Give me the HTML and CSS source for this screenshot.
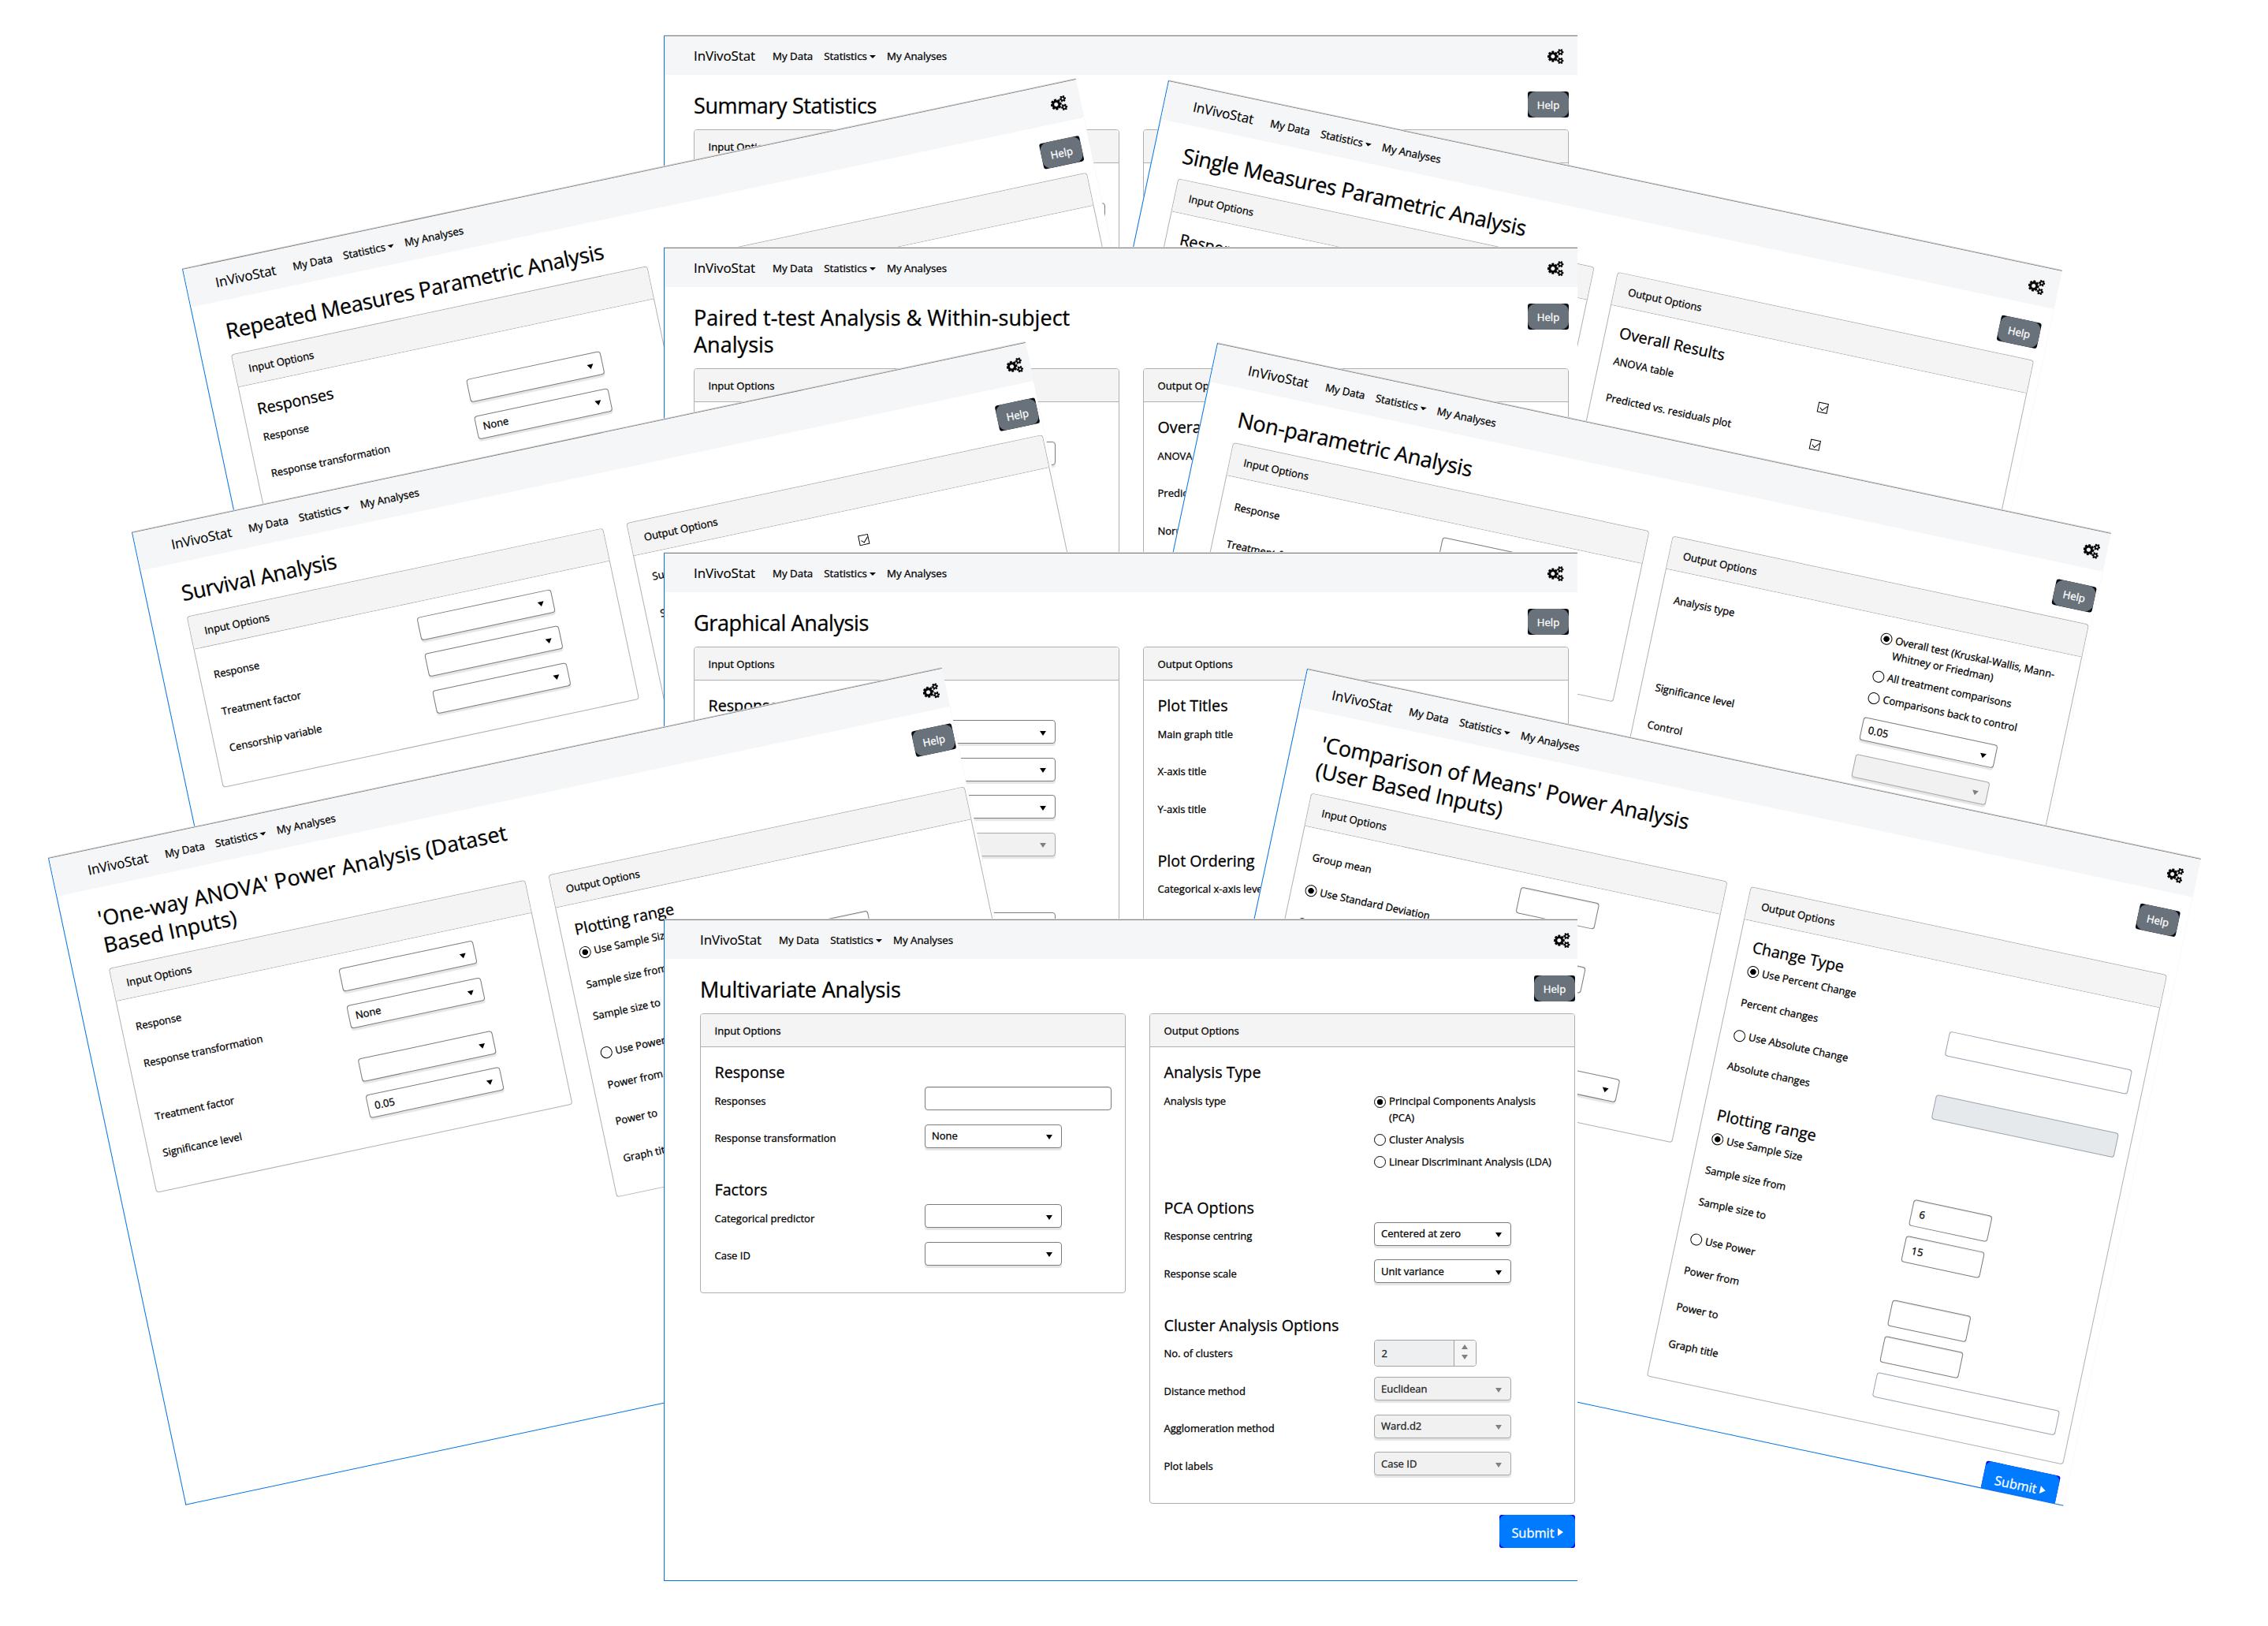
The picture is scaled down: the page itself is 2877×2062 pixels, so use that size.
FILE: index.html
```html
<!DOCTYPE html>
<html lang="en">
<head>
<meta charset="utf-8">
<title>InVivoStat</title>
<link rel="stylesheet" href="styles.css">
</head>
<body>
<svg class="sprite" aria-hidden="true">
  <symbol id="cogs" viewBox="0 0 1920 1792"><path d="M896 896q0-106-75-181t-181-75-181 75-75 181 75 181 181 75 181-75 75-181zm768 512q0-52-38-90t-90-38-90 38-38 90q0 53 37.5 90.5t90.5 37.5 90.5-37.5 37.5-90.5zm0-1024q0-52-38-90t-90-38-90 38-38 90q0 53 37.5 90.5t90.5 37.5 90.5-37.5 37.5-90.5zm-384 421v185q0 10-7 19.5t-16 10.5l-155 24q-11 35-32 76 34 48 90 115 7 11 7 20 0 12-7 19-23 30-82.5 89.5t-78.5 59.5q-11 0-21-7l-115-90q-37 19-77 31-11 108-23 155-7 24-30 24h-186q-11 0-20-7.5t-10-17.5l-23-153q-34-10-75-31l-118 89q-7 7-20 7-11 0-21-8-144-133-144-160 0-9 7-19 10-14 41-53t47-61q-23-44-35-82l-152-24q-10-1-17-9.5t-7-19.5v-185q0-10 7-19.5t16-10.5l155-24q11-35 32-76-34-48-90-115-7-11-7-20 0-12 7-20 22-30 82-89t79-59q11 0 21 7l115 90q34-18 77-32 11-108 23-154 7-24 30-24h186q11 0 20 7.5t10 17.5l23 153q34 10 75 31l118-89q8-7 20-7 11 0 21 8 144 133 144 160 0 8-7 19-12 16-42 54t-45 60q23 48 34 82l152 23q10 2 17 10.5t7 19.5zm640 533v140q0 16-149 31-12 27-30 52 51 113 51 138 0 4-4 7-122 71-124 71-8 0-46-47t-52-68q-20 2-30 2t-30-2q-14 21-52 68t-46 47q-2 0-124-71-4-3-4-7 0-25 51-138-18-25-30-52-149-15-149-31v-140q0-16 149-31 13-29 30-52-51-113-51-138 0-4 4-7 4-2 35-20t59-34 30-16q8 0 46 46.5t52 67.5q20-2 30-2t30 2q51-71 92-112l6-2q4 0 124 70 4 3 4 7 0 25-51 138 17 23 30 52 149 15 149 31zm0-1024v140q0 16-149 31-12 27-30 52 51 113 51 138 0 4-4 7-122 71-124 71-8 0-46-47t-52-68q-20 2-30 2t-30-2q-14 21-52 68t-46 47q-2 0-124-71-4-3-4-7 0-25 51-138-18-25-30-52-149-15-149-31v-140q0-16 149-31 13-29 30-52-51-113-51-138 0-4 4-7 4-2 35-20t59-34 30-16q8 0 46 46.5t52 67.5q20-2 30-2t30 2q51-71 92-112l6-2q4 0 124 70 4 3 4 7 0 25-51 138 17 23 30 52 149 15 149 31z"/></symbol>
</svg>
<main class="desktop">

  <article class="window summary">
    <nav class="navbar"><a class="brand">InVivoStat</a><a>My Data</a><a class="dropdown">Statistics</a><a>My Analyses</a><svg class="cogs"><use href="#cogs"/></svg></nav>
    <div class="page">
      <header class="heading"><h1>Summary Statistics</h1><button class="help">Help</button></header>
      <div class="cards">
        <section class="card tall">
          <h2>Input Options</h2>
          <div class="body">
            <fieldset>
              <h3>Responses</h3>
              <div class="row"><label>Responses</label><span class="text"></span></div>
            </fieldset>
          </div>
        </section>
        <section class="card tall"><h2>Output Options</h2></section>
      </div>
    </div>
  </article>

  <article class="window repeated">
    <nav class="navbar"><a class="brand">InVivoStat</a><a>My Data</a><a class="dropdown">Statistics</a><a>My Analyses</a><svg class="cogs"><use href="#cogs"/></svg></nav>
    <div class="page">
      <header class="heading"><h1>Repeated Measures Parametric Analysis</h1><button class="help">Help</button></header>
      <div class="cards">
        <section class="card tall">
          <h2>Input Options</h2>
          <div class="body">
            <fieldset>
              <h3>Responses</h3>
              <div class="row"><label>Response</label><span class="select"></span></div>
              <div class="row"><label>Response transformation</label><span class="select">None</span></div>
            </fieldset>
          </div>
        </section>
        <section class="card tall"><h2>Output Options</h2></section>
      </div>
    </div>
  </article>

  <article class="window single">
    <nav class="navbar"><a class="brand">InVivoStat</a><a>My Data</a><a class="dropdown">Statistics</a><a>My Analyses</a><svg class="cogs"><use href="#cogs"/></svg></nav>
    <div class="page">
      <header class="heading"><h1>Single Measures Parametric Analysis</h1><button class="help">Help</button></header>
      <div class="cards">
        <section class="card tall">
          <h2>Input Options</h2>
          <div class="body"><fieldset><h3>Responses</h3></fieldset></div>
        </section>
        <section class="card tall">
          <h2>Output Options</h2>
          <div class="body">
            <fieldset>
              <h3>Overall Results</h3>
              <div class="row"><label>ANOVA table</label><span class="check"></span></div>
              <div class="row"><label>Predicted vs. residuals plot</label><span class="check"></span></div>
            </fieldset>
          </div>
        </section>
      </div>
    </div>
  </article>

  <article class="window paired">
    <nav class="navbar"><a class="brand">InVivoStat</a><a>My Data</a><a class="dropdown">Statistics</a><a>My Analyses</a><svg class="cogs"><use href="#cogs"/></svg></nav>
    <div class="page">
      <header class="heading"><h1 class="wide">Paired t-test Analysis &amp; Within-subject<br>Analysis</h1><button class="help">Help</button></header>
      <div class="cards">
        <section class="card tall">
          <h2>Input Options</h2>
          <div class="body">
            <fieldset>
              <h3>Responses</h3>
              <div class="row"><label>Response</label><span class="select"></span></div>
            </fieldset>
          </div>
        </section>
        <section class="card tall">
          <h2>Output Options</h2>
          <div class="body">
            <fieldset>
              <h3>Overall Results</h3>
              <div class="row"><label>ANOVA table</label></div>
              <div class="row"><label>Predicted vs. residuals plot</label></div>
              <div class="row"><label>Normal probability plot</label></div>
            </fieldset>
          </div>
        </section>
      </div>
    </div>
  </article>

  <article class="window survival inset">
    <nav class="navbar"><a class="brand">InVivoStat</a><a>My Data</a><a class="dropdown">Statistics</a><a>My Analyses</a><svg class="cogs"><use href="#cogs"/></svg></nav>
    <div class="page">
      <header class="heading"><h1>Survival Analysis</h1><button class="help">Help</button></header>
      <div class="cards">
        <section class="card">
          <h2>Input Options</h2>
          <div class="body plain">
            <fieldset>
              <div class="row"><label>Response</label><span class="select"></span></div>
              <div class="row"><label>Treatment factor</label><span class="select"></span></div>
              <div class="row"><label>Censorship variable</label><span class="select"></span></div>
            </fieldset>
          </div>
        </section>
        <section class="card tall">
          <h2>Output Options</h2>
          <div class="body plain">
            <fieldset>
              <div class="row raised"><label>Survival plot</label><span class="check"></span></div>
              <div class="row raised"><label>Significance level</label></div>
            </fieldset>
          </div>
        </section>
      </div>
    </div>
  </article>

  <article class="window nonparametric inset">
    <nav class="navbar"><a class="brand">InVivoStat</a><a>My Data</a><a class="dropdown">Statistics</a><a>My Analyses</a><svg class="cogs"><use href="#cogs"/></svg></nav>
    <div class="page">
      <header class="heading"><h1 class="loose">Non-parametric Analysis</h1><button class="help">Help</button></header>
      <div class="cards">
        <section class="card">
          <h2>Input Options</h2>
          <div class="body plain">
            <fieldset>
              <div class="row"><label>Response</label><span class="select"></span></div>
              <div class="row"><label>Treatment factor</label></div>
              <div class="row"></div>
            </fieldset>
          </div>
        </section>
        <section class="card tall">
          <h2>Output Options</h2>
          <div class="body plain">
            <fieldset>
              <div class="row options compact">
                <label>Analysis type</label>
                <div class="radios">
                  <span class="radio on">Overall test (Kruskal-Wallis, Mann-<br>Whitney or Friedman)</span>
                  <span class="radio">All treatment comparisons</span>
                  <span class="radio">Comparisons back to control</span>
                </div>
              </div>
              <div class="row"><label>Significance level</label><span class="select">0.05</span></div>
              <div class="row"><label>Control</label><span class="select disabled"></span></div>
            </fieldset>
          </div>
        </section>
      </div>
    </div>
  </article>

  <article class="window graphical">
    <nav class="navbar"><a class="brand">InVivoStat</a><a>My Data</a><a class="dropdown">Statistics</a><a>My Analyses</a><svg class="cogs"><use href="#cogs"/></svg></nav>
    <div class="page">
      <header class="heading"><h1>Graphical Analysis</h1><button class="help">Help</button></header>
      <div class="cards">
        <section class="card tall">
          <h2>Input Options</h2>
          <div class="body">
            <fieldset>
              <h3>Response</h3>
              <div class="row"><label></label><span class="select"></span></div>
              <div class="row"><label></label><span class="select"></span></div>
              <div class="row"><label></label><span class="select"></span></div>
              <div class="row"><label></label><span class="select disabled"></span></div>
            </fieldset>
            <fieldset>
              <h3></h3>
              <div class="row"><label></label><span class="select"></span></div>
            </fieldset>
          </div>
        </section>
        <section class="card tall">
          <h2>Output Options</h2>
          <div class="body">
            <fieldset>
              <h3>Plot Titles</h3>
              <div class="row"><label>Main graph title</label></div>
              <div class="row"><label>X-axis title</label></div>
              <div class="row"><label>Y-axis title</label></div>
            </fieldset>
            <fieldset>
              <h3>Plot Ordering</h3>
              <div class="row"><label>Categorical x-axis levels order</label></div>
            </fieldset>
          </div>
        </section>
      </div>
    </div>
  </article>

  <article class="window anova inset">
    <nav class="navbar"><a class="brand">InVivoStat</a><a>My Data</a><a class="dropdown">Statistics</a><a>My Analyses</a><svg class="cogs"><use href="#cogs"/></svg></nav>
    <div class="page">
      <header class="heading"><h1 class="wide">'One-way ANOVA' Power Analysis (Dataset<br>Based Inputs)</h1><button class="help">Help</button></header>
      <div class="cards">
        <section class="card">
          <h2>Input Options</h2>
          <div class="body plain">
            <fieldset>
              <div class="row"><label>Response</label><span class="select"></span></div>
              <div class="row spaced"><label>Response transformation</label><span class="select">None</span></div>
              <div class="row"><label>Treatment factor</label><span class="select"></span></div>
              <div class="row"><label>Significance level</label><span class="select">0.05</span></div>
            </fieldset>
          </div>
        </section>
        <section class="card">
          <h2>Output Options</h2>
          <div class="body">
            <fieldset>
              <h3>Plotting range</h3>
              <div class="toggle"><span class="radio on">Use Sample Size</span></div>
              <div class="row"><label>Sample size from</label><span class="number"></span></div>
              <div class="row raised"><label>Sample size to</label><span class="number"></span></div>
              <div class="toggle"><span class="radio">Use Power</span></div>
              <div class="row"><label>Power from</label><span class="number"></span></div>
              <div class="row"><label>Power to</label><span class="number"></span></div>
              <div class="row"><label>Graph title</label><span class="text"></span></div>
            </fieldset>
          </div>
        </section>
      </div>
    </div>
  </article>

  <article class="window comparison">
    <nav class="navbar"><a class="brand">InVivoStat</a><a>My Data</a><a class="dropdown">Statistics</a><a>My Analyses</a><svg class="cogs"><use href="#cogs"/></svg></nav>
    <div class="page">
      <header class="heading"><h1 class="loose">'Comparison of Means' Power Analysis<br>(User Based Inputs)</h1><button class="help">Help</button></header>
      <div class="cards">
        <section class="card">
          <h2>Input Options</h2>
          <div class="body plain">
            <fieldset>
              <div class="row"><label>Group mean</label><span class="number"></span></div>
              <div class="toggle"><span class="radio on">Use Standard Deviation</span></div>
              <div class="row"><label>Standard deviation</label><span class="number"></span></div>
              <div class="toggle"></div>
              <div class="row"></div>
              <div class="row"><label></label><span class="select"></span></div>
            </fieldset>
          </div>
        </section>
        <section class="card">
          <h2>Output Options</h2>
          <div class="body">
            <fieldset>
              <h3>Change Type</h3>
              <div class="toggle"><span class="radio on">Use Percent Change</span></div>
              <div class="row"><label>Percent changes</label><span class="text slate"></span></div>
              <div class="toggle"><span class="radio">Use Absolute Change</span></div>
              <div class="row"><label>Absolute changes</label><span class="text slate filled"></span></div>
            </fieldset>
            <fieldset class="closer">
              <h3>Plotting range</h3>
              <div class="toggle"><span class="radio on">Use Sample Size</span></div>
              <div class="row"><label>Sample size from</label><span class="number">6</span></div>
              <div class="row raised"><label>Sample size to</label><span class="number">15</span></div>
              <div class="toggle"><span class="radio">Use Power</span></div>
              <div class="row"><label>Power from</label><span class="number"></span></div>
              <div class="row"><label>Power to</label><span class="number"></span></div>
              <div class="row"><label>Graph title</label><span class="text slate"></span></div>
            </fieldset>
          </div>
        </section>
      </div>
      <footer class="actions"><button class="submit">Submit</button></footer>
    </div>
  </article>

  <article class="window multivariate inset">
    <nav class="navbar"><a class="brand">InVivoStat</a><a>My Data</a><a class="dropdown">Statistics</a><a>My Analyses</a><svg class="cogs"><use href="#cogs"/></svg></nav>
    <div class="page">
      <header class="heading"><h1 class="loose">Multivariate Analysis</h1><button class="help">Help</button></header>
      <div class="cards">
        <section class="card">
          <h2>Input Options</h2>
          <div class="body">
            <fieldset>
              <h3>Response</h3>
              <div class="row"><label>Responses</label><span class="text"></span></div>
              <div class="row"><label>Response transformation</label><span class="select">None</span></div>
            </fieldset>
            <fieldset>
              <h3>Factors</h3>
              <div class="row"><label>Categorical predictor</label><span class="select"></span></div>
              <div class="row"><label>Case ID</label><span class="select"></span></div>
            </fieldset>
          </div>
        </section>
        <section class="card">
          <h2>Output Options</h2>
          <div class="body">
            <fieldset>
              <h3>Analysis Type</h3>
              <div class="row options">
                <label>Analysis type</label>
                <div class="radios">
                  <span class="radio on">Principal Components Analysis<br>(PCA)</span>
                  <span class="radio">Cluster Analysis</span>
                  <span class="radio">Linear Discriminant Analysis (LDA)</span>
                </div>
              </div>
            </fieldset>
            <fieldset>
              <h3>PCA Options</h3>
              <div class="row"><label>Response centring</label><span class="select">Centered at zero</span></div>
              <div class="row"><label>Response scale</label><span class="select">Unit variance</span></div>
            </fieldset>
            <fieldset>
              <h3>Cluster Analysis Options</h3>
              <div class="row"><label>No. of clusters</label><span class="spinner"><span class="value">2</span><span class="steps"></span></span></div>
              <div class="row"><label>Distance method</label><span class="select disabled">Euclidean</span></div>
              <div class="row"><label>Agglomeration method</label><span class="select disabled">Ward.d2</span></div>
              <div class="row"><label>Plot labels</label><span class="select disabled">Case ID</span></div>
            </fieldset>
          </div>
        </section>
      </div>
      <footer class="actions"><button class="submit">Submit</button></footer>
    </div>
  </article>

</main>
</body>
</html>
```

FILE: styles.css
```css
* { box-sizing: border-box; }

body {
  margin: 0;
  background: #fff;
  color: #000;
  font: 13px/20.7px "Open Sans", "Noto Sans", sans-serif;
  -webkit-text-stroke: 0.3px;
}

.sprite { display: none; }

.desktop {
  position: relative;
  width: 2877px;
  height: 2062px;
  overflow: hidden;
}

/* Windows scattered over the canvas */
.window {
  position: absolute;
  width: 1159px;
  height: 839px;
  overflow: hidden;
  background: #fff;
  border-top: 1px solid #858585;
  border-left: 1px solid #0073e6;
  border-bottom: 1px solid #0073e6;
  box-shadow: 0 -1px 0 #dedede;
  transform-origin: 0 0;
}

.summary { left: 842px; top: 45px; }
.paired { left: 842px; top: 314px; }
.graphical { left: 842px; top: 701px; }
.multivariate { left: 842px; top: 1166px; }

.repeated { left: 231.2px; top: 340.8px; transform: rotate(-12deg); }
.survival { left: 167.4px; top: 675px; transform: rotate(-12deg); }
.anova { left: 60.7px; top: 1087.8px; transform: rotate(-12deg); }

.single { left: 1481.8px; top: 102.4px; transform: rotate(12deg); }
.nonparametric { left: 1543.8px; top: 434.6px; transform: rotate(12deg); }
.comparison { left: 1657.6px; top: 848px; transform: rotate(12deg); }

/* Navigation */
.navbar {
  display: flex;
  align-items: center;
  width: 1159px;
  height: 49px;
  padding: 1.5px 18.5px 0 37px;
  background: #f5f6f8;
  font-size: 13.3px;
}

.navbar a { margin-right: 14px; white-space: nowrap; }
.navbar .brand { margin-right: 22px; font-size: 17px; letter-spacing: -0.12px; -webkit-text-stroke: 0.15px; }

.dropdown { display: flex; align-items: center; }
.dropdown::after {
  content: "";
  margin: 1px 0 0 3px;
  border: 4.7px solid transparent;
  border-top: 4.7px solid #000;
  border-bottom: 0;
}

.cogs { width: 20.5px; height: 19.2px; margin-left: auto; fill: #000; stroke: #000; stroke-width: 30; }

.page { width: 1147px; padding: 22.2px 0 0 37px; }

.inset .navbar { width: 1167px; padding-left: 45px; }
.inset .page { width: 1155px; padding-left: 45px; }

.heading {
  display: flex;
  justify-content: space-between;
  align-items: flex-start;
  padding-bottom: 13.4px;
}

h1, h2, h3 { margin: 0; font-weight: 400; }

h1 {
  font-size: 27px;
  line-height: 33.6px;
  letter-spacing: -0.38px;
  white-space: nowrap;
}
h1.loose { letter-spacing: -0.2px; }
h1.wide { letter-spacing: 0.03px; }

button {
  position: relative;
  z-index: 0;
  display: flex;
  align-items: center;
  justify-content: center;
  padding: 0;
  border: 0;
  border-radius: 3px;
  color: #fff;
  font-family: inherit;
  -webkit-text-stroke: 0.3px;
}

button::before {
  content: "";
  position: absolute;
  inset: 0;
  z-index: -1;
}

.help { width: 52px; height: 33px; margin-top: -1.2px; background: #070d14; font-size: 13.2px; }
.help::before { border-radius: 10px; background: #69727b; }

.submit { width: 96px; height: 42px; padding-top: 2px; background: #0000f5; font-size: 16.4px; }
.submit::before { border-radius: 8px; background: #007bff; }
.submit::after {
  content: "";
  margin: 0 0 0 4px;
  border: 5.5px solid transparent;
  border-left: 7px solid #fff;
  border-right: 0;
}

.actions { display: flex; justify-content: flex-end; padding-top: 14.5px; }

/* Cards */
.cards { display: grid; grid-template-columns: 540px 540px; justify-content: space-between; align-items: start; }

.card { border: 1px solid #b0b0b0; border-radius: 4px; background: #fff; }
.card.tall { min-height: 700px; }

.card h2 {
  height: 42px;
  padding: 0 17.5px;
  border-bottom: 1px solid #b0b0b0;
  border-radius: 3px 3px 0 0;
  background: #f4f4f4;
  font-size: 13.1px;
  line-height: 42px;
}

.body { padding: 20px 17.5px 23px; }
.body.plain { padding: 12.5px 17.5px 23px; }

fieldset { margin: 0; padding: 0; border: 0; min-width: 0; }
fieldset + fieldset { margin-top: 30px; }
fieldset.closer { margin-top: 28px; }

h3 { height: 24px; font-size: 19.7px; line-height: 24px; white-space: nowrap; }

.row { display: flex; align-items: flex-start; height: 47.5px; }
.row.spaced { margin-bottom: 21.5px; }
.row label { width: 266px; flex: none; padding-top: 13.8px; white-space: nowrap; }
.row.raised label { padding-top: 7.8px; }
.row.options { height: 117.5px; }
.row.compact { height: 112.8px; }

/* Controls */
.select, .text, .number, .spinner {
  display: flex;
  align-items: center;
  margin-top: 6px;
  border: 1px solid #7c7c7c;
  border-radius: 4px;
  background: #fff;
}

.select {
  justify-content: space-between;
  width: 174px;
  height: 30px;
  padding: 0 10.5px 0.5px 8.5px;
  box-shadow: 0 3px 1px rgba(0, 0, 0, 0.1);
}
.select::after {
  content: "";
  margin: 4px 0 0 auto;
  border: 4.5px solid transparent;
  border-top: 6px solid #000;
  border-bottom: 0;
}
.select.disabled { border-color: #a8a8a8; background: #f1f1f1; color: #222; }
.select.disabled::after { border-top-color: #808080; }

.text { width: 237px; height: 30px; box-shadow: inset 0 1px 1px rgba(0, 0, 0, 0.1); }
.text.slate { height: 32px; margin-top: 5px; border-color: #98a4b1; box-shadow: none; }
.text.filled { background: #e5e9ec; }

.number { width: 102px; height: 34px; padding: 1px 0 0 10px; box-shadow: inset 0 1px 1px rgba(0, 0, 0, 0.12); }

.spinner { width: 130px; height: 34px; border-color: #a2a2a2; align-items: stretch; overflow: hidden; }
.spinner .value { flex: 1; padding-left: 9px; background: #edeff1; line-height: 33px; color: #222; }
.spinner .steps {
  display: flex;
  flex-direction: column;
  align-items: center;
  justify-content: center;
  gap: 7px;
  width: 28px;
  padding-bottom: 3px;
  border-left: 1px solid #a2a2a2;
  background: #f6f6f6;
}
.steps::before, .steps::after { content: ""; border: 4px solid transparent; }
.steps::before { border-top: 0; border-bottom: 6px solid #808080; }
.steps::after { border-bottom: 0; border-top: 6px solid #808080; }

.check {
  width: 13px;
  height: 13px;
  margin: 21px 0 0 -0.5px;
  border: 1.2px solid #000;
}
.check::after {
  content: "";
  display: block;
  width: 8px;
  height: 4px;
  margin: 2px 0 0 1.5px;
  border: solid #000;
  border-width: 0 0 1.4px 1.4px;
  transform: rotate(-48deg);
}

.radios { display: flex; flex-direction: column; gap: 7.3px; margin-top: 13.9px; }
.compact .radios { margin-top: 5px; }

.radio { display: flex; gap: 4.6px; white-space: nowrap; }
.radio::before {
  content: "";
  flex: none;
  width: 13px;
  height: 13px;
  margin-top: 3.6px;
  border: 1.4px solid #000;
  border-radius: 50%;
}
.radio.on::before { background: radial-gradient(circle, #000 3.4px, transparent 4px); }

.toggle { height: 35px; padding-top: 8px; margin-left: -1px; }
```
